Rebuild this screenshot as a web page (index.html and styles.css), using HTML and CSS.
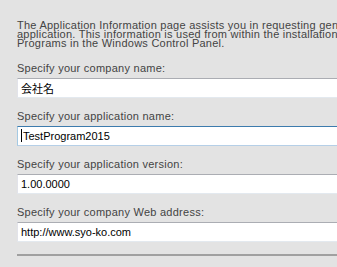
FILE: index.html
```html
<!DOCTYPE html>
<html lang="en">
<head>
  <meta charset="UTF-8">
  <title>Application Information</title>
  <link rel="stylesheet" href="styles.css">
</head>
<body>
  <div class="page">
    <p class="intro">
      The Application Information page assists you in requesting general information about your<br>
      application. This information is used from within the installation and the Add/Remove<br>
      Programs in the Windows Control Panel.
    </p>
    <div class="field">
      <label for="company">Specify your company name:</label>
      <input type="text" id="company" value="会社名">
    </div>
    <div class="field">
      <label for="appname">Specify your application name:</label>
      <div class="text-box focused" id="appname"><span class="caret"></span>TestProgram2015</div>
    </div>
    <div class="field">
      <label for="version">Specify your application version:</label>
      <input type="text" id="version" value="1.00.0000">
    </div>
    <div class="field">
      <label for="web">Specify your company Web address:</label>
      <input type="text" id="web" value="http://www.syo-ko.com">
    </div>
    <div class="separator"></div>
  </div>
</body>
</html>
```
FILE: styles.css
```css
body {
  margin: 0;
  background: #e3e3e3;
  overflow: hidden;
  font-family: "Liberation Sans", "Noto Sans CJK JP", sans-serif;
}
.page {
  width: 600px;
  padding: 21px 0 0 17px;
}
.intro {
  margin: 0;
  font-size: 11px;
  line-height: 9px;
  letter-spacing: 0.25px;
  color: #444;
  white-space: nowrap;
}
.field {
  display: flex;
  flex-direction: column;
  gap: 4px;
  margin-bottom: 12px;
}
.intro + .field {
  margin-top: 14px;
}
.field label {
  font-size: 11px;
  line-height: 12px;
  letter-spacing: 0.25px;
  color: #444;
}
.field input,
.text-box {
  box-sizing: border-box;
  width: 560px;
  height: 20px;
  margin: 0;
  padding: 0 3px;
  border: 1px solid;
  border-color: #abadb3 #e3e9ef #e3e9ef #e2e3ea;
  background: #fff;
  font-family: "Liberation Sans", "Noto Sans CJK JP", sans-serif;
  font-size: 11px;
  line-height: 18px;
  color: #000;
  outline: none;
}
.text-box.focused {
  border-color: #3d7bad #b5cfe7 #b5cfe7 #a4c9e3;
}
.caret {
  display: inline-block;
  width: 1px;
  height: 13px;
  margin-right: 1px;
  vertical-align: -2px;
  background: #000;
}
.separator {
  width: 560px;
  height: 2px;
  margin-top: 2px;
  background: #a0a0a0;
}
```
